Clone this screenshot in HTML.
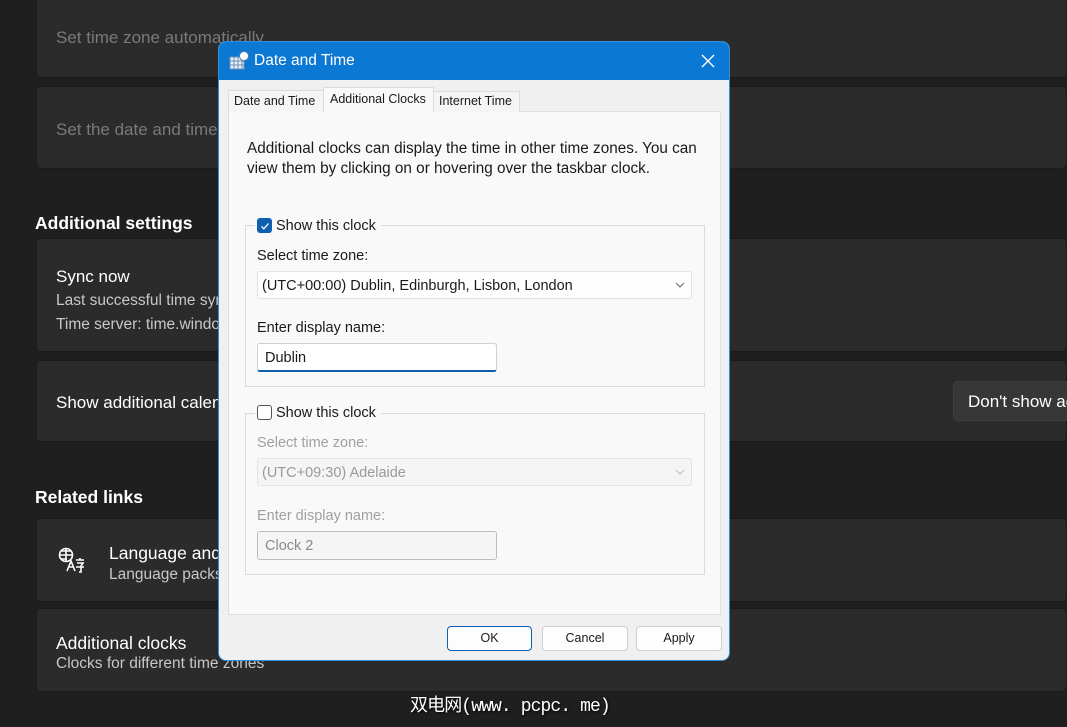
<!DOCTYPE html>
<html><head><meta charset="utf-8"><style>
*{margin:0;padding:0;box-sizing:border-box}
body{width:1067px;height:727px;overflow:hidden;background:#1f1f1f;font-family:"Liberation Sans","Noto Sans CJK SC",sans-serif;position:relative;color:#fff}
.a{position:absolute}
.card{position:absolute;left:36px;right:0;background:#2b2b2b;border-radius:5px;border:1px solid #1b1b1b}
.t{position:absolute;white-space:nowrap}
.dim{color:#7a7a7a}
.sub{color:#c8c8c8;font-size:15.5px}
.dlg{position:absolute;left:218px;top:41px;width:512px;height:620px;background:#f0f0f0;border:1px solid #2f8fd8;border-radius:8px;overflow:hidden;color:#1a1a1a;font-size:14.5px}
.fs{position:absolute;border:1px solid #dcdcdc}
.cb{position:absolute;width:15px;height:15px;border-radius:3px}
.combo{position:absolute;background:#fdfdfd;border:1px solid #e2e2e2;border-radius:3px;height:28px;padding:6px 4px;font-size:14.5px}
.inp{position:absolute;background:#fff;border:1px solid #d0d0d0;border-radius:3px;padding:6px 7px;font-size:14.5px}
.btn{position:absolute;top:584px;height:25px;background:#fdfdfd;border:1px solid #d0d0d0;border-radius:4px;font-size:12.5px;text-align:center;line-height:23px}
</style></head><body>
<div class="card" style="top:-5px;height:83px"></div>
<div class="t dim" style="left:56px;top:28px;font-size:17px">Set time zone automatically</div>
<div class="card" style="top:86px;height:83px"></div>
<div class="t dim" style="left:56px;top:120px;font-size:17px">Set the date and time</div>
<div class="t" style="left:35px;top:213px;font-size:17.5px;font-weight:bold">Additional settings</div>
<div class="card" style="top:238px;height:114px"></div>
<div class="t" style="left:56px;top:267px;font-size:17px">Sync now</div>
<div class="t sub" style="left:56px;top:292px">Last successful time sync</div>
<div class="t sub" style="left:56px;top:316px">Time server: time.windows.com</div>
<div class="card" style="top:360px;height:82px"></div>
<div class="t" style="left:56px;top:393px;font-size:17px">Show additional calendars</div>
<div class="a" style="left:953px;top:381px;width:114px;height:40px;background:#373737;border:1px solid #3e3e3e;border-right:none;border-radius:5px 0 0 5px;overflow:hidden;font-size:17px;padding:10px 0 0 14px;white-space:nowrap">Don't show additional</div>
<div class="t" style="left:35px;top:487px;font-size:17.5px;font-weight:bold">Related links</div>
<div class="card" style="top:518px;height:84px"></div>
<svg class="a" style="left:58px;top:547px" width="28" height="28" viewBox="0 0 28 28" fill="none" stroke="#fff" stroke-width="1.6"><circle cx="8" cy="8" r="6.5"/><path d="M1.5 8h13M8 1.5v13M3 4h10M3 12h6"/><path d="M9 24l4-10 4 10M10.5 20h5" /><path d="M18 13h8M22 11v2M19 16h6l-2 3v6h-2M18 20h8"/></svg>
<div class="t" style="left:109px;top:543px;font-size:17.5px">Language and region</div>
<div class="t sub" style="left:109px;top:566px">Language packs</div>
<div class="card" style="top:608px;height:84px"></div>
<div class="t" style="left:56px;top:633px;font-size:17.5px">Additional clocks</div>
<div class="t sub" style="left:56px;top:655px">Clocks for different time zones</div>
<div class="t" style="left:410px;top:691px;font-size:18px;font-family:'Liberation Mono','Noto Sans CJK SC',monospace;text-shadow:1px 1px 2px #000;letter-spacing:-0.9px">双电网(www. pcpc. me)</div>

<div class="dlg">
 <div class="a" style="left:0;top:0;width:512px;height:38px;background:#0b78d3"></div>
 <svg class="a" style="left:10px;top:9px" width="20" height="20" viewBox="0 0 20 20"><rect x="1" y="6" width="14" height="12" fill="#e8f0f8" stroke="#6b8fb8"/><path d="M1 10h14M1 14h14M5 6v12M9 6v12M13 6v12" stroke="#6b8fb8" stroke-width="1"/><circle cx="15" cy="5" r="4.5" fill="#fff" stroke="#5a7fa8"/></svg>
 <div class="t" style="left:35px;top:10px;font-size:15.5px;color:#fff">Date and Time</div>
 <svg class="a" style="left:482px;top:12px" width="14" height="14" viewBox="0 0 14 14" stroke="#fff" stroke-width="1.4"><path d="M1 1l12 12M13 1L1 13"/></svg>
 <div class="a" style="left:9px;top:69px;width:493px;height:504px;background:#f9f9f9;border:1px solid #e0e0e0"></div>
 <div class="a" style="left:9px;top:48px;width:96px;height:22px;border:1px solid #dcdcdc;border-bottom:none;background:#f5f5f5"></div>
 <div class="t" style="left:15px;top:52px;font-size:12.5px">Date and Time</div>
 <div class="a" style="left:104px;top:45px;width:111px;height:25px;border:1px solid #dcdcdc;border-bottom:none;background:#f9f9f9"></div>
 <div class="t" style="left:111px;top:50px;font-size:12.5px">Additional Clocks</div>
 <div class="a" style="left:214px;top:49px;width:87px;height:21px;border:1px solid #dcdcdc;border-bottom:none;background:#f5f5f5"></div>
 <div class="t" style="left:220px;top:52px;font-size:12.5px">Internet Time</div>
 <div class="t" style="left:28px;top:97px;font-size:15.3px;line-height:20px">Additional clocks can display the time in other time zones. You can<br>view them by clicking on or hovering over the taskbar clock.</div>

 <div class="fs" style="left:26px;top:183px;width:460px;height:162px"></div>
 <div class="a" style="left:36px;top:174px;width:126px;height:20px;background:#f9f9f9"></div>
 <div class="cb" style="left:38px;top:176px;background:#0f5fb0"></div>
 <svg class="a" style="left:41px;top:179px" width="10" height="10" viewBox="0 0 10 10" fill="none" stroke="#fff" stroke-width="1.3"><path d="M1.5 5.5l2.3 2.3L8.5 2.5"/></svg>
 <div class="t" style="left:57px;top:176px">Show this clock</div>
 <div class="t" style="left:38px;top:206px">Select time zone:</div>
 <div class="combo" style="left:38px;top:229px;width:435px">(UTC+00:00) Dublin, Edinburgh, Lisbon, London<svg style="position:absolute;right:6px;top:10px" width="10" height="6" viewBox="0 0 10 6" fill="none" stroke="#666"><path d="M1 1l4 4 4-4"/></svg></div>
 <div class="t" style="left:38px;top:278px">Enter display name:</div>
 <div class="inp" style="left:38px;top:301px;width:240px;height:29px;border-bottom:2px solid #0a5fa8">Dublin</div>

 <div class="fs" style="left:26px;top:371px;width:460px;height:162px"></div>
 <div class="a" style="left:36px;top:362px;width:126px;height:20px;background:#f9f9f9"></div>
 <div class="cb" style="left:38px;top:363px;background:#fff;border:1px solid #555"></div>
 <div class="t" style="left:57px;top:363px">Show this clock</div>
 <div class="t" style="left:38px;top:393px;color:#a0a0a0">Select time zone:</div>
 <div class="combo" style="left:38px;top:416px;width:435px;color:#9a9a9a;background:#f5f5f5">(UTC+09:30) Adelaide<svg style="position:absolute;right:6px;top:10px" width="10" height="6" viewBox="0 0 10 6" fill="none" stroke="#bbb"><path d="M1 1l4 4 4-4"/></svg></div>
 <div class="t" style="left:38px;top:466px;color:#a0a0a0">Enter display name:</div>
 <div class="inp" style="left:38px;top:489px;width:240px;height:29px;color:#8a8a8a;background:#f5f5f5;border-color:#bdbdbd">Clock 2</div>

 <div class="btn" style="left:228px;width:85px;border-color:#0f5fb0">OK</div>
 <div class="btn" style="left:323px;width:86px">Cancel</div>
 <div class="btn" style="left:417px;width:86px">Apply</div>
</div>
</body></html>
